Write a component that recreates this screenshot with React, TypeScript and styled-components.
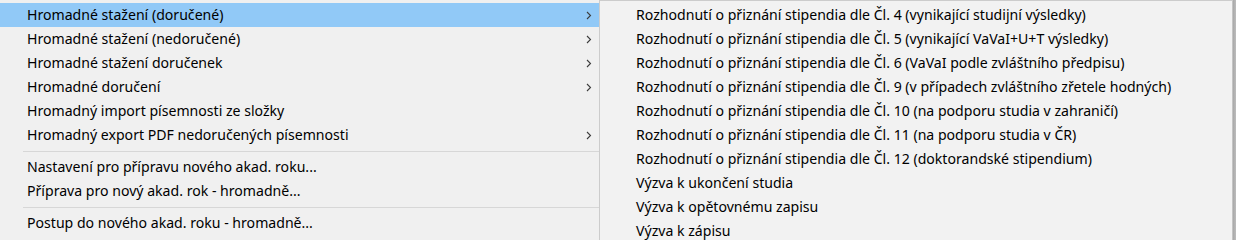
import styled, { createGlobalStyle } from "styled-components";

const GlobalStyle = createGlobalStyle`
  html, body {
    margin: 0;
    padding: 0;
    background: #f0f0f0;
    overflow: hidden;
  }
  body {
    font-family: "Noto Sans", "Segoe UI", sans-serif;
    font-size: 14.1px;
    color: #000000;
  }
`;

const Screen = styled.div`
  width: 1236px;
  height: 240px;
  display: flex;
  flex-direction: row;
  overflow: hidden;
`;

const Menu = styled.div`
  width: 599px;
  flex-shrink: 0;
  padding-top: 3px;
  background: #f0f0f0;
  border-right: 1px solid #cccccc;
`;

const SubMenu = styled.div`
  flex: 1;
  padding-top: 2px;
  background: #f2f2f2;
  border-top: 1px solid #cccccc;
  border-right: 1px solid #c4c4c4;
`;

const Shadow = styled.div`
  width: 3px;
  flex-shrink: 0;
  background: linear-gradient(to right, #a8a8a8, #bdbdbd);
`;

const Item = styled.div<{ $active?: boolean; $indent: number }>`
  height: 24px;
  display: flex;
  align-items: center;
  padding-left: ${(p) => p.$indent}px;
  padding-right: 7px;
  line-height: 24px;
  white-space: nowrap;
  background: ${(p) => (p.$active ? "#91c9f7" : "transparent")};
`;

const Label = styled.span`
  flex: 1;
`;

const Separator = styled.div`
  height: 8px;
  display: flex;
  align-items: center;
  padding-left: 23px;

  &::after {
    content: "";
    flex: 1;
    height: 1px;
    background: #d7d7d7;
  }
`;

const Chevron = () => (
  <svg width="6" height="9" viewBox="0 0 6 9">
    <polyline points="1,1 4.5,4.5 1,8" fill="none" stroke="#3c3c3c" strokeWidth="1.1" />
  </svg>
);

type Entry = { label: string; sub?: boolean } | "sep";

const mainItems: Entry[] = [
  { label: "Hromadné stažení (doručené)", sub: true },
  { label: "Hromadné stažení (nedoručené)", sub: true },
  { label: "Hromadné stažení doručenek", sub: true },
  { label: "Hromadné doručení", sub: true },
  { label: "Hromadný import písemnosti ze složky" },
  { label: "Hromadný export PDF nedoručených písemnosti", sub: true },
  "sep",
  { label: "Nastavení pro přípravu nového akad. roku..." },
  { label: "Příprava pro nový akad. rok - hromadně..." },
  "sep",
  { label: "Postup do nového akad. roku - hromadně..." },
];

const subItems = [
  "Rozhodnutí o přiznání stipendia dle Čl. 4 (vynikající studijní výsledky)",
  "Rozhodnutí o přiznání stipendia dle Čl. 5 (vynikající VaVaI+U+T výsledky)",
  "Rozhodnutí o přiznání stipendia dle Čl. 6 (VaVaI podle zvláštního předpisu)",
  "Rozhodnutí o přiznání stipendia dle Čl. 9 (v případech zvláštního zřetele hodných)",
  "Rozhodnutí o přiznání stipendia dle Čl. 10 (na podporu studia v zahraničí)",
  "Rozhodnutí o přiznání stipendia dle Čl. 11 (na podporu studia v ČR)",
  "Rozhodnutí o přiznání stipendia dle Čl. 12 (doktorandské stipendium)",
  "Výzva k ukončení studia",
  "Výzva k opětovnému zapisu",
  "Výzva k zápisu",
];

export default function App() {
  return (
    <>
      <GlobalStyle />
      <Screen>
        <Menu>
          {mainItems.map((entry, i) =>
            entry === "sep" ? (
              <Separator key={i} />
            ) : (
              <Item key={i} $indent={27} $active={i === 0}>
                <Label>{entry.label}</Label>
                {entry.sub && <Chevron />}
              </Item>
            )
          )}
        </Menu>
        <SubMenu>
          {subItems.map((label, i) => (
            <Item key={i} $indent={36}>
              <Label>{label}</Label>
            </Item>
          ))}
        </SubMenu>
        <Shadow />
      </Screen>
    </>
  );
}
